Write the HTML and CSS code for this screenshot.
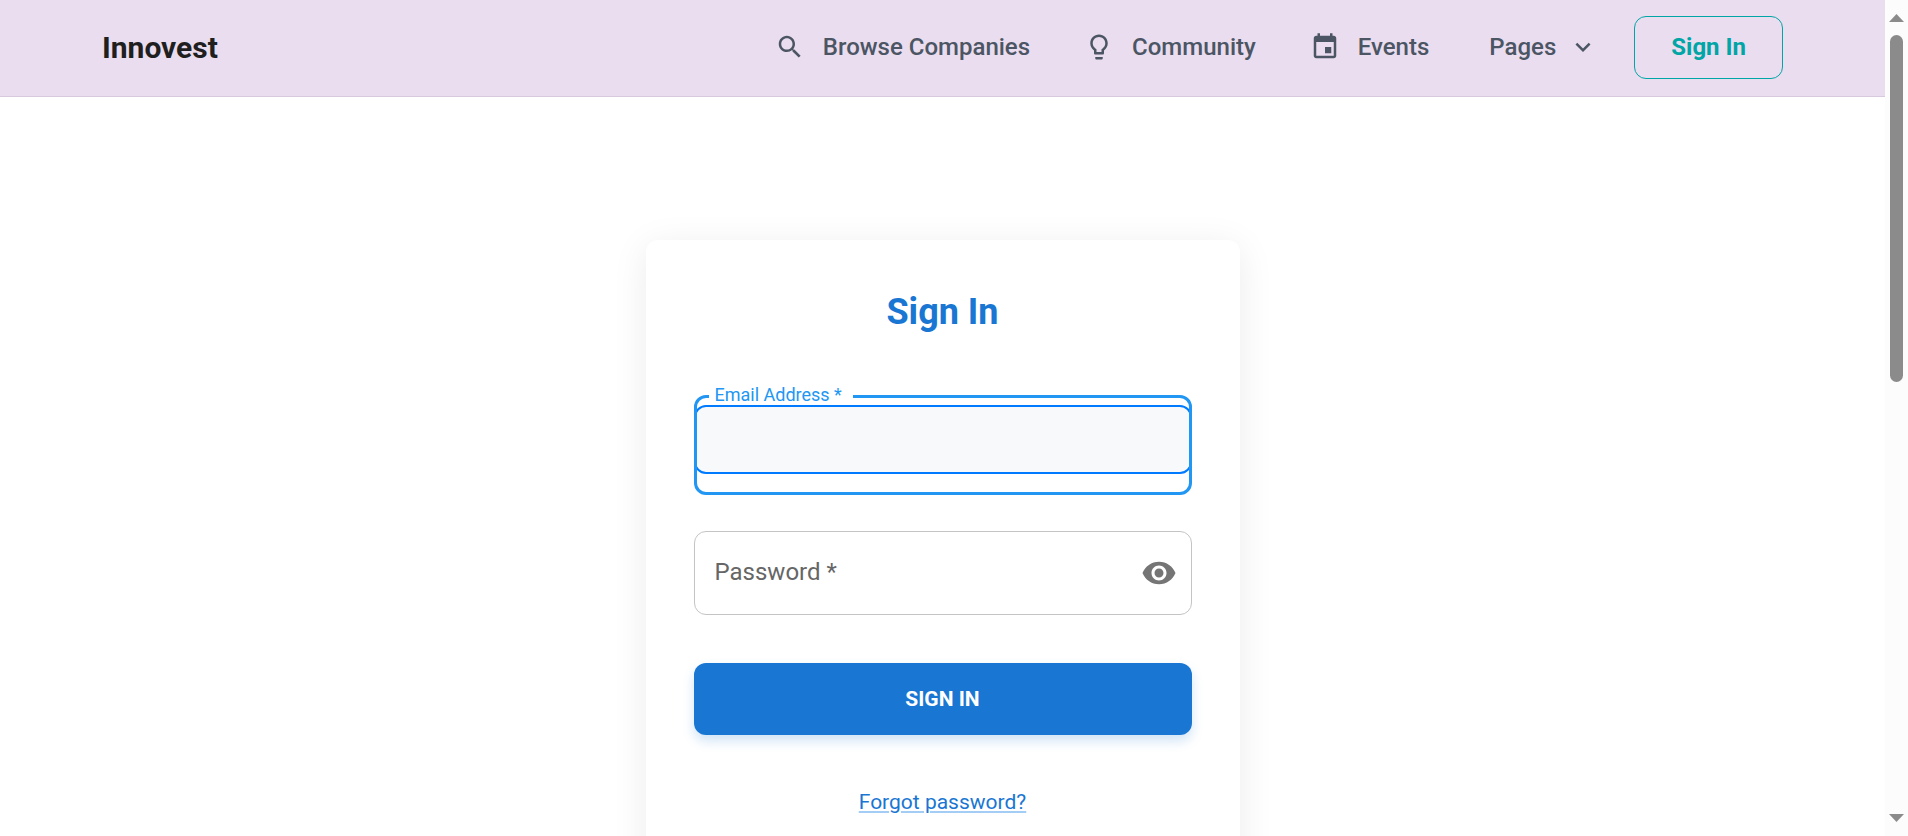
FILE: index.html
```html
<!DOCTYPE html>
<html lang="en">
<head>
<meta charset="utf-8">
<meta name="viewport" content="width=device-width, initial-scale=1">
<title>Innovest – Sign In</title>
<link rel="stylesheet" href="styles.css">
</head>
<body>
<div class="page">
  <header class="topbar">
    <a class="brand" href="#">Innovest</a>
    <nav class="nav">
      <a class="nav-link" href="#"><svg class="icon" viewBox="0 0 24 24" aria-hidden="true"><path d="M15.5 14h-.79l-.28-.27C15.41 12.59 16 11.11 16 9.5 16 5.91 13.09 3 9.5 3S3 5.91 3 9.5 5.91 16 9.5 16c1.61 0 3.09-.59 4.23-1.57l.27.28v.79l5 4.99L20.49 19l-4.99-5zm-6 0C7.01 14 5 11.99 5 9.5S7.01 5 9.5 5 14 7.01 14 9.5 11.99 14 9.5 14z"/></svg>Browse Companies</a>
      <a class="nav-link" href="#"><svg class="icon" viewBox="0 0 24 24" aria-hidden="true"><path d="M9 21c0 .55.45 1 1 1h4c.55 0 1-.45 1-1v-1H9v1zm3-19C8.14 2 5 5.14 5 9c0 2.38 1.19 4.47 3 5.74V17c0 .55.45 1 1 1h6c.55 0 1-.45 1-1v-2.26c1.81-1.27 3-3.36 3-5.74 0-3.86-3.14-7-7-7zm2.85 11.1-.85.6V16h-4v-2.3l-.85-.6C7.8 12.16 7 10.63 7 9c0-2.76 2.24-5 5-5s5 2.24 5 5c0 1.63-.8 3.16-2.15 4.1z"/></svg>Community</a>
      <a class="nav-link" href="#"><svg class="icon" viewBox="0 0 24 24" aria-hidden="true"><path d="M17 12h-5v5h5v-5zM16 1v2H8V1H6v2H5c-1.11 0-1.99.9-1.99 2L3 19c0 1.1.89 2 2 2h14c1.1 0 2-.9 2-2V5c0-1.1-.9-2-2-2h-1V1h-2zm3 18H5V8h14v11z"/></svg>Events</a>
      <button class="nav-link nav-menu" type="button">Pages<svg class="icon" viewBox="0 0 24 24" aria-hidden="true"><path d="M7.41 8.59 12 13.17l4.59-4.58L18 10l-6 6-6-6 1.41-1.41z"/></svg></button>
      <a class="signin-link" href="#">Sign In</a>
    </nav>
  </header>
  <main class="content">
    <form class="card">
      <h1 class="title">Sign In</h1>
      <div class="field field-email">
        <label class="float-label" for="email">Email Address *</label>
        <input class="email-input" id="email" type="email" required>
      </div>
      <div class="field field-password">
        <label class="password-label" for="password">Password *</label>
        <input class="password-input" id="password" type="password" required>
        <button class="reveal" type="button" aria-label="Show password"><svg class="icon-eye" viewBox="0 0 24 24" aria-hidden="true"><path d="M12 4.5C7 4.5 2.73 7.61 1 12c1.73 4.39 6 7.5 11 7.5s9.27-3.11 11-7.5c-1.73-4.39-6-7.5-11-7.5zM12 17c-2.76 0-5-2.24-5-5s2.24-5 5-5 5 2.24 5 5-2.24 5-5 5zm0-8c-1.66 0-3 1.34-3 3s1.34 3 3 3 3-1.34 3-3-1.34-3-3-3z"/></svg></button>
      </div>
      <button class="submit" type="submit">SIGN IN</button>
      <a class="forgot" href="#">Forgot password?</a>
    </form>
  </main>
</div>
<div class="scrollbar" aria-hidden="true">
  <svg class="arrow" viewBox="0 0 15 8"><path d="M0 8 7.5 0 15 8z"/></svg>
  <div class="track"><div class="thumb"></div></div>
  <svg class="arrow" viewBox="0 0 15 8"><path d="M0 0h15L7.500 8z"/></svg>
</div>
</body>
</html>
```
FILE: styles.css
```css
* { box-sizing: border-box; }

body {
  margin: 0;
  display: flex;
  height: 100vh;
  overflow: hidden;
  background: #fff;
  font-family: Roboto, "Liberation Sans", sans-serif;
}

a { color: inherit; text-decoration: none; }

button {
  font: inherit;
  color: inherit;
  background: none;
  border: 0;
  padding: 0;
  cursor: pointer;
}

.page {
  flex: 1;
  min-width: 0;
  overflow: hidden;
}

.topbar {
  display: flex;
  align-items: center;
  justify-content: space-between;
  padding: 16px 102px 17px;
  background: #eaddef;
  border-bottom: 1px solid #d9c9df;
}

.brand {
  font-size: 30px;
  line-height: 36px;
  font-weight: 700;
  color: #1f1f1f;
}

.nav {
  display: flex;
  align-items: center;
  color: #4b5563;
  font-size: 24px;
  line-height: 32px;
  font-weight: 500;
}

.nav-link {
  display: flex;
  align-items: center;
  gap: 18px;
  margin-right: 54px;
  padding-bottom: 1px;
}

.nav-menu {
  gap: 12px;
  margin-left: 6px;
  margin-right: 36px;
}

.icon {
  width: 30px;
  height: 30px;
  fill: currentColor;
}

.signin-link {
  padding: 14px 36px 15px;
  border: 1px solid #00a5a5;
  border-radius: 12px;
  color: #00a5a5;
  font-weight: 700;
}

.content {
  display: flex;
  justify-content: center;
  padding-top: 143px;
}

.card {
  display: flex;
  flex-direction: column;
  width: 594px;
  padding: 48px 48px 96px;
  background: #fff;
  border-radius: 12px;
  box-shadow: 0 6px 36px rgba(0, 0, 0, 0.08);
}

.title {
  margin: 0 0 59px;
  font-size: 36px;
  line-height: 48px;
  font-weight: 700;
  text-align: center;
  color: #1976d2;
}

.field {
  position: relative;
  border-radius: 12px;
}

.field-email {
  height: 100px;
  padding-top: 10px;
  margin-bottom: 36px;
}

.field-email::after {
  content: "";
  position: absolute;
  inset: 0;
  border: 3px solid #2196f3;
  border-radius: 12px;
  pointer-events: none;
}

.float-label {
  position: absolute;
  z-index: 1;
  top: -11px;
  left: 15px;
  padding: 0 11px 0 6px;
  background: linear-gradient(#fff, #fff) 0 0 / 100% 20px no-repeat;
  color: #2196f3;
  font-size: 18px;
  line-height: 22px;
}

.email-input {
  display: block;
  width: 100%;
  height: 69px;
  padding: 0 21px;
  border: 2px solid #007bff;
  border-radius: 12px;
  outline: 0;
  background: #f8f9fb;
  font: inherit;
  font-size: 24px;
}

.field-password {
  display: flex;
  align-items: center;
  height: 84px;
  padding: 0 14px 0 20px;
  border: 1px solid #c4c4c4;
  margin-bottom: 48px;
}

.password-label {
  padding-bottom: 2px;
  color: #666;
  font-size: 24px;
  line-height: 36px;
}

.password-input {
  flex: 1;
  min-width: 0;
  height: 48px;
  border: 0;
  outline: 0;
  background: none;
  font: inherit;
  font-size: 24px;
}

.reveal { display: flex; }

.icon-eye {
  width: 36px;
  height: 36px;
  fill: #757575;
}

.submit {
  height: 72px;
  margin-bottom: 49px;
  border-radius: 12px;
  background: #1976d2;
  box-shadow: 0 6px 12px rgba(25, 118, 210, 0.2);
  color: #fff;
  font-size: 21px;
  font-weight: 700;
}

.forgot {
  align-self: center;
  color: #1976d2;
  font-size: 21px;
  line-height: 36px;
  text-decoration: underline 2px #a3cdf5;
  text-underline-offset: 2px;
}

.scrollbar {
  display: flex;
  flex-direction: column;
  align-items: center;
  width: 23px;
  padding: 14px 0;
  background: #fcfcfc;
}

.arrow {
  width: 15px;
  height: 8px;
  fill: #8b8b8b;
}

.track {
  flex: 1;
  width: 13px;
  padding: 13px 0;
}

.thumb {
  height: 347px;
  border-radius: 7px;
  background: #8b8b8b;
}
```
